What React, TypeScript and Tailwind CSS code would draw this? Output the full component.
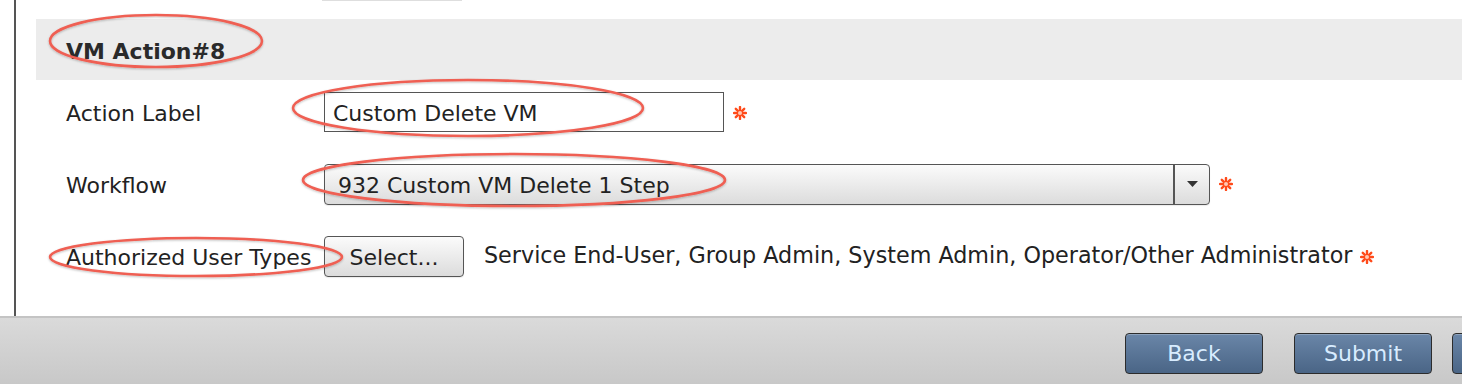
import React from 'react';

function Req() {
  return (
    <svg width="14" height="14" viewBox="0 0 14 14" className="shrink-0">
      <g stroke="#ff4a1a" strokeWidth="2.4" strokeLinecap="round">
        <line x1="7" y1="1" x2="7" y2="13" />
        <line x1="1" y1="7" x2="13" y2="7" />
        <line x1="2.8" y1="2.8" x2="11.2" y2="11.2" />
        <line x1="11.2" y1="2.8" x2="2.8" y2="11.2" />
      </g>
      <circle cx="7" cy="7" r="2" fill="#ffc8b4" />
    </svg>
  );
}

function Ring({ cx, cy, rx, ry }: { cx: number; cy: number; rx: number; ry: number }) {
  return (
    <ellipse
      cx={cx}
      cy={cy}
      rx={rx}
      ry={ry}
      fill="none"
      stroke="#ef5f52"
      strokeWidth="2.6"
      filter="url(#ringShadow)"
    />
  );
}

function FooterButton({ label }: { label: string }) {
  return (
    <button className="h-[41px] w-[138px] shrink-0 rounded-[4px] border border-[#2c2c2c] bg-gradient-to-b from-[#6a86a8] to-[#4a6586] text-[22px] text-[#d8ecff] shadow-[inset_0_1px_0_rgba(255,255,255,0.25)]">
      {label}
    </button>
  );
}

export default function App() {
  return (
    <div
      className="relative w-[1462px] h-[384px] overflow-hidden bg-white text-[#222]"
      style={{ fontFamily: '"DejaVu Sans", Verdana, sans-serif' }}
    >
      <div className="flex flex-col h-full">
        {/* Form panel */}
        <div className="h-[316px] flex">
          <div className="w-[14px] shrink-0" />
          <div className="flex-1 border-l-2 border-[#555] relative">
            <div className="ml-[306px] w-[140px] h-px bg-[#dedede]" />
            <div className="ml-[20px] mt-[18px] h-[61px] bg-[#ececec] flex items-center pl-[30px] pt-[4px]">
              <span className="text-[22px] font-bold text-[#2a2a2a]">VM Action#8</span>
            </div>

            <div className="mt-[12px] pl-[50px] flex flex-col gap-[32px] text-[22px]">
              {/* Action label */}
              <div className="flex items-center h-[40px]">
                <div className="w-[258px] shrink-0 pt-[2px]">Action Label</div>
                <div className="w-[400px] h-[40px] border border-[#555] flex items-center pl-[8px] pt-[2px]">
                  Custom Delete VM
                </div>
                <div className="ml-[9px] mt-[2px]">
                  <Req />
                </div>
              </div>

              {/* Workflow */}
              <div className="flex items-center h-[40px]">
                <div className="w-[258px] shrink-0 pt-[2px]">Workflow</div>
                <div className="w-[886px] h-[41px] border border-[#555] rounded-[4px] flex bg-gradient-to-b from-[#fbfbfb] to-[#dcdcdc] shadow-[0_1px_1px_rgba(0,0,0,0.08)]">
                  <div className="flex-1 flex items-center pl-[13px] pt-[2px]">932 Custom VM Delete 1 Step</div>
                  <div className="w-[36px] border-l-2 border-[#555] flex items-center justify-center">
                    <svg width="11" height="6" viewBox="0 0 11 6">
                      <path d="M0 0 H11 L5.5 6 Z" fill="#333" />
                    </svg>
                  </div>
                </div>
                <div className="ml-[9px]">
                  <Req />
                </div>
              </div>

              {/* Authorized user types */}
              <div className="flex items-center h-[40px]">
                <div className="w-[258px] shrink-0 pt-[2px]">Authorized User Types</div>
                <button className="w-[140px] h-[41px] border border-[#555] rounded-[4px] bg-gradient-to-b from-[#fbfbfb] to-[#dcdcdc] text-[22px] text-[#222] pt-[2px] shadow-[0_1px_1px_rgba(0,0,0,0.08)]">
                  Select...
                </button>
                <div className="ml-[20px] whitespace-nowrap text-[22.25px]">
                  Service End-User, Group Admin, System Admin, Operator/Other Administrator
                </div>
                <div className="ml-[8px] mt-[2px]">
                  <Req />
                </div>
              </div>
            </div>
          </div>
        </div>

        {/* Footer */}
        <div className="flex-1 border-t-2 border-[#c4c4c4] bg-gradient-to-b from-[#dadada] to-[#c8c8c8] flex items-start justify-end gap-[31px] pt-[15px]">
          <FooterButton label="Back" />
          <div className="flex gap-[20px] -mr-[128px]">
            <FooterButton label="Submit" />
            <FooterButton label="" />
          </div>
        </div>
      </div>

      {/* Annotation rings */}
      <svg className="absolute inset-0 pointer-events-none" width="1462" height="384">
        <defs>
          <filter id="ringShadow" x="-10%" y="-30%" width="120%" height="160%">
            <feDropShadow dx="0" dy="1" stdDeviation="1" floodColor="#000" floodOpacity="0.25" />
          </filter>
        </defs>
        <Ring cx={156} cy={41} rx={106} ry={26} />
        <Ring cx={468} cy={108} rx={175} ry={28} />
        <Ring cx={514} cy={180} rx={211} ry={26} />
        <Ring cx={196} cy={257} rx={146} ry={19} />
      </svg>
    </div>
  );
}
